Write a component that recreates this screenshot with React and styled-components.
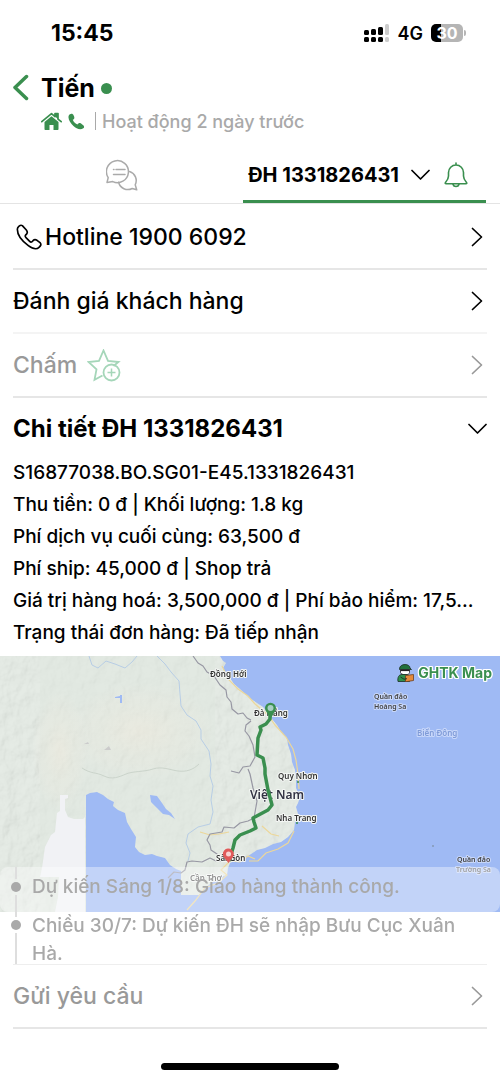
import React from "react";
import styled, { createGlobalStyle, css } from "styled-components";

const GREEN = "#3a8f4f";

const GlobalStyle = createGlobalStyle`
  * {
    box-sizing: border-box;
  }
  body {
    margin: 0;
    background: #fff;
    color: #000;
    font-family: Inter, "Noto Sans", sans-serif;
  }
  button {
    font: inherit;
    color: inherit;
    background: none;
    border: 0;
    padding: 0;
    text-align: left;
    cursor: pointer;
  }
  p, h1, h2, ul {
    margin: 0;
    padding: 0;
    list-style: none;
  }
  svg {
    display: block;
    flex: none;
  }
`;

const StatusBar = styled.div`
  height: 66px;
  padding: 0 34px 0 51px;
  display: flex;
  align-items: center;
  justify-content: space-between;
`;

const Clock = styled.span`
  font-size: 23px;
  font-weight: 700;
`;

const StatusIcons = styled.div`
  display: flex;
  align-items: center;
  gap: 8px;
  font-size: 18px;
  font-weight: 600;
`;

const Battery = styled.div`
  display: flex;
  align-items: center;
  gap: 1px;
  &::after {
    content: "";
    width: 2px;
    height: 6px;
    border-radius: 0 2px 2px 0;
    background: #b5b5b5;
  }
`;

const BatteryBody = styled.div`
  width: 32px;
  height: 18px;
  border-radius: 5px;
  background: linear-gradient(90deg, #000 30%, #b5b5b5 30%);
  color: #fff;
  font-size: 16px;
  font-weight: 700;
  line-height: 18px;
  text-align: center;
`;

const Header = styled.header`
  height: 81px;
  padding: 6px 13px 0;
  display: flex;
  align-items: flex-start;
  gap: 12px;
`;

const BackButton = styled.button`
  margin-top: 2px;
`;

const NameRow = styled.div`
  height: 32px;
  display: flex;
  align-items: center;
  gap: 6px;
`;

const Name = styled.h1`
  font-size: 25px;
  line-height: 32px;
  font-weight: 700;
`;

const OnlineDot = styled.span`
  width: 11px;
  height: 11px;
  border-radius: 50%;
  background: ${GREEN};
`;

const Activity = styled.div`
  height: 34px;
  display: flex;
  align-items: center;
  gap: 6px;
  color: #a9a9a9;
  font-size: 18px;
  font-weight: 500;
`;

const Separator = styled.span`
  width: 1px;
  height: 18px;
  margin: 0 0 0 4px;
  background: #a9a9a9;
`;

const Tabs = styled.nav`
  height: 57px;
  padding: 0 14px 0 0;
  display: flex;
  border-bottom: 1px solid #e4e4e4;
`;

const Tab = styled.button`
  width: 50%;
  display: flex;
  align-items: center;
  justify-content: center;
  white-space: nowrap;
  ${({ $active }) => $active && css`
    gap: 14px;
    padding: 3px 18px 0 0;
    justify-content: flex-end;
    border-bottom: 3px solid ${GREEN};
  `}
`;

const TabLabel = styled.span`
  display: flex;
  align-items: center;
  gap: 12px;
  font-size: 20px;
  font-weight: 700;
`;

const Content = styled.main`
  padding-top: 2px;
`;

const MenuRow = styled.button`
  width: calc(100% - 26px);
  height: 64px;
  margin: 0 13px;
  padding: 0 4px 0 0;
  display: flex;
  align-items: center;
  justify-content: space-between;
  border-bottom: 2px solid ${({ $light }) => ($light ? "#f4f4f4" : "#e6e6e6")};
  color: ${({ $muted }) => ($muted ? "#999" : "#000")};
  font-size: 23px;
  font-weight: 500;
`;

const RowLabel = styled.span`
  display: flex;
  align-items: center;
  gap: ${({ $gap }) => $gap || 0}px;
`;

const DetailHeader = styled.button`
  width: calc(100% - 26px);
  height: 59px;
  margin: 0 13px;
  padding-top: 2px;
  display: flex;
  align-items: center;
  justify-content: space-between;
`;

const DetailTitle = styled.span`
  font-size: 24px;
  font-weight: 700;
`;

const DetailList = styled.ul`
  padding: 0 10px 7px 13px;
  font-size: 19px;
  line-height: 32px;
  font-weight: 500;
`;

const DetailItem = styled.li`
  overflow: hidden;
  text-overflow: ellipsis;
  white-space: nowrap;
`;

const MapPanel = styled.section`
  position: relative;
  background: #9fbaf4;
  svg.map {
    width: 100%;
    height: auto;
  }
`;

const MapBrand = styled.div`
  position: absolute;
  top: 6px;
  right: 8px;
  display: flex;
  align-items: center;
  gap: 4px;
  color: ${GREEN};
  font-size: 14px;
  line-height: 22px;
  font-weight: 700;
  text-shadow: 1px 0 #fff, -1px 0 #fff, 0 1px #fff, 0 -1px #fff, 1px 1px #fff, -1px -1px #fff, 1px -1px #fff, -1px 1px #fff;
`;

const MapText = styled.text`
  font-family: "Noto Sans", sans-serif;
  font-size: ${({ $size }) => $size || 8}px;
  font-weight: 600;
  fill: ${({ $fill }) => $fill || "#333"};
  stroke: ${({ $halo }) => $halo || "#f4f6f4"};
  stroke-width: 2px;
  stroke-linejoin: round;
  paint-order: stroke;
`;

const Timeline = styled.ul`
  position: relative;
  margin-top: -45px;
`;

const TimelineItem = styled.li`
  min-height: 45px;
  padding: 0 13px 0 11px;
  display: flex;
  gap: 11px;
  color: #a9a9a9;
  font-size: 19px;
  line-height: 28px;
  font-weight: 500;
  ${({ $glass }) => $glass && css`
    border-radius: 8px;
    background: rgba(255, 255, 255, 0.37);
  `}
`;

const Rail = styled.span`
  width: 10px;
  display: flex;
  flex-direction: column;
  align-items: center;
  gap: 3px;
`;

const RailLine = styled.span`
  width: 2px;
  flex: ${({ $length }) => ($length ? `0 0 ${$length}px` : "1")};
  background: #dedede;
`;

const RailDot = styled.span`
  width: 10px;
  height: 10px;
  border-radius: 50%;
  background: #a9a9a9;
`;

const TimelineText = styled.p`
  flex: 1;
  padding-top: ${({ $top }) => $top}px;
  margin-bottom: -4px;
`;

const Divider = styled.hr`
  height: 1px;
  margin: 0 13px;
  border: 0;
  background: #eee;
`;

const HomeIndicator = styled.div`
  width: 178px;
  height: 7px;
  margin: 34px auto 10px;
  border-radius: 4px;
  background: #000;
`;

function SignalIcon() {
  return (
    <svg width="26" height="18" viewBox="0 0 26 18">
      <g fill="#000">
        <rect x="0" y="6" width="5" height="5" rx="1.500" />
        <rect x="7" y="5" width="5" height="6" rx="1.500" />
        <rect x="14" y="3" width="5" height="8" rx="1.500" />
        <rect x="0" y="13" width="5" height="5" rx="1.500" />
        <rect x="7" y="13" width="5" height="5" rx="1.500" />
        <rect x="14" y="13" width="5" height="5" rx="1.500" />
      </g>
      <g fill="#ccc">
        <rect x="21" y="0" width="4" height="11" rx="1.500" />
        <rect x="21" y="13" width="4" height="5" rx="1.500" />
      </g>
    </svg>
  );
}

function BackIcon() {
  return (
    <svg width="16" height="27" viewBox="0 0 16 27" fill="none" stroke={GREEN} strokeWidth="3.500" strokeLinecap="round" strokeLinejoin="round">
      <path d="M13.500 2.500 2 13.500l11.500 11" />
    </svg>
  );
}

function HomeIcon() {
  return (
    <svg width="21" height="18" viewBox="0 0 21 18" fill={GREEN}>
      <path d="M10.500 4.200 3.500 10v7c0 .6.400 1 1 1h4v-5h4v5h4c.6 0 1-.4 1-1v-7z" />
      <path d="M.8 9.700 10.500 1.600l3.500 3V1.500h3v5.600l3.200 2.600" fill="none" stroke={GREEN} strokeWidth="1.700" strokeLinecap="round" strokeLinejoin="round" />
      <path d="M14 1h3v6l-3-2.500z" />
    </svg>
  );
}

function SmallPhoneIcon() {
  return (
    <svg width="17" height="17" viewBox="171 129 50 50" fill={GREEN}>
      <path d="M173 137c4-7 12-8 15 0 3 6 2 10-3 12 3 7 8 12 14 14 3-5 8-6 13-1 7 4 8 9 4 12-9 6-21 1-29-7-9-9-17-20-14-30z" />
    </svg>
  );
}

function ChatIcon() {
  return (
    <svg width="32" height="32" viewBox="0 0 32 32" fill="none" stroke="#aaa" strokeWidth="1.500" strokeLinecap="round" strokeLinejoin="round">
      <path d="M1 23.500 2.200 18.600A11 11 0 1 1 6.800 22.600z" />
      <path d="M7.500 10.500h.5M10 10.500h9M7.500 15.500h11.500" />
      <path d="M23.600 12.500a9.500 9.500 0 0 1 5.600 13.300l1.500 5-4.500-1.300a9.500 9.500 0 0 1-13.600-6.200" />
    </svg>
  );
}

function BellIcon() {
  return (
    <svg width="24" height="26" viewBox="0 0 24 26" fill="none" stroke={GREEN} strokeWidth="1.600" strokeLinecap="round" strokeLinejoin="round">
      <path d="M12 1v2M4.500 14V10.500a7.500 7.500 0 0 1 15 0V14c0 3 1.200 4.500 3 6.500.6.800.3 1.300-.6 1.300H2.100c-.9 0-1.200-.5-.6-1.300 1.800-2 3-3.500 3-6.500zM9 22.500c.8 2.700 5.200 2.700 6 0" />
    </svg>
  );
}

function PhoneIcon() {
  return (
    <svg width="29" height="26" viewBox="39 250 87 78" fill="none" stroke="#000" strokeWidth="5" strokeLinejoin="round">
      <path d="M52 266c0-7 9-15 15-11l12 13c4 5 4 8 1 12-5 4-6 7-2 11l11 11c4 4 7 2 10-2 4-4 7-4 12-1l9 7c5 5 2 10-3 14-6 6-17 6-32-5-18-13-33-31-33-49z" />
    </svg>
  );
}

function StarPlusIcon() {
  return (
    <svg width="34" height="33" viewBox="0 0 34 33" fill="none" stroke="#a5d6b9" strokeWidth="1.800">
      <path d="M26.500 17 31.500 13 21 11.800 16.500 1.500 12 11.800 1.500 13l8 7.300-2 10.500 8-4.300" strokeLinejoin="miter" />
      <circle cx="24.500" cy="23.500" r="8" />
      <path d="M24.500 19.500v8M20.500 23.500h8" strokeWidth="1.500" />
    </svg>
  );
}

function ChevronRight() {
  return (
    <svg width="12" height="20" viewBox="0 0 12 20" fill="none" stroke="currentColor" strokeWidth="1.700" strokeLinecap="round" strokeLinejoin="round">
      <path d="m1.500 1.500 9 8.500-9 8.500" />
    </svg>
  );
}

function ChevronDown() {
  return (
    <svg width="19" height="12" viewBox="0 0 19 12" fill="none" stroke="currentColor" strokeWidth="1.700" strokeLinecap="round" strokeLinejoin="round">
      <path d="m1 1.500 8.500 8.500L18 1.500" />
    </svg>
  );
}

function CourierIcon() {
  return (
    <svg width="17" height="18" viewBox="0 0 17 18">
      <path d="M2.500 5C2.500 2 5 .5 8 .5s5 1.500 5 3.500l1.500 1.500h-12z" fill="#22713d" stroke="#1c2d22" strokeWidth=".8" />
      <path d="M3.500 5.500h9v3c0 1.500-1.500 2.200-4 2.200S3.500 10 3.500 8.500z" fill="#fff" stroke="#222" strokeWidth=".8" />
      <path d="M3.500 5.500h9v1.600h-9z" fill="#222" />
      <path d="M1 17.500c-.7-4 .8-7 4-7h4c2 0 3 1 3.500 3v4z" fill="#2f8f4b" stroke="#1c2d22" strokeWidth=".8" />
      <path d="m8.500 11.500 8-1v6l-8 1.300z" fill="#e58a3c" stroke="#6b3f1e" strokeWidth=".8" />
      <path d="m3.500 13 3.500 2.200 3-.5" fill="none" stroke="#1c2d22" strokeWidth=".9" />
    </svg>
  );
}

const LAND =
  "M0 0H220l3 5 3 2-3 5 2 5 5 5 4 6 6 5 5 5 6 5 6 4 6 4 5 6 4 6 5 6 4 7 6 6 1 7 3 9 1 8 3 8 1 10 0 8 4 9-2 6-2 4 2 7-3 8-1 8-6 7-7 5-8 2-8 4-8 2-9 6-8 1-4 3-6 3-2 5-1 7-9 3-8 6-6 5-5 6H181v-24l-5-2-6-4-5-7-8-2-5-2-7 1-6-3-4-5 1-10-5-8-4-7-2-9-7-3-5-4 1-4-6-3-5-4-6-3-7 1-4 2V256H0z";

function RouteMap() {
  return (
    <svg className="map" viewBox="0 0 500 256" role="img" aria-label="GHTK Map">
      <defs>
        <clipPath id="land">
          <path d={LAND} />
        </clipPath>
        <filter id="relief" x="0" y="0" width="100%" height="100%">
          <feTurbulence type="fractalNoise" baseFrequency="0.08 0.06" numOctaves="4" seed="8" />
          <feDiffuseLighting surfaceScale="3" lightingColor="#fff">
            <feDistantLight azimuth="225" elevation="62" />
          </feDiffuseLighting>
        </filter>
        <radialGradient id="plain">
          <stop offset="0" stopColor="#e8e8dd" />
          <stop offset="1" stopColor="#e8e8dd" stopOpacity="0" />
        </radialGradient>
      </defs>
      <rect width="500" height="256" fill="#9fbaf4" />
      <path d={LAND} fill="#dfe7df" />
      <g clipPath="url(#land)">
        <ellipse cx="140" cy="75" rx="75" ry="48" fill="url(#plain)" />
        <ellipse cx="60" cy="95" rx="28" ry="60" fill="url(#plain)" />
        <g opacity="0.2">
          <rect width="40" height="256" filter="url(#relief)" />
          <rect x="215" width="95" height="256" filter="url(#relief)" />
        </g>
        <rect x="40" width="175" height="256" filter="url(#relief)" opacity="0.1" />
        <path d="M82 112c9 6 14 4 22 8s15 1 22-2 18-2 27-5 17 1 25 2 15-1 21-7" fill="none" stroke="#cbd4cb" />
      </g>
      <path d="M60 139h8v3l-3 1v11l3 7 6 2h9l2-2v95H55l3-15 1-20H40l2-9 3-21 6-12 4-3 2-19 3-2z" fill="#f1f2f5" />
      <path d="M150 139l7 1 5 7 4 6 5 4 4 6-6-4-6-1-6-6-6-6zM115 41l5-1v-1h2v8h-2v-5h-5z" fill="#9fbaf4" />
      <path d="m104 94 5-4 2 4zM84 88l4-2 1 2z" fill="#cbcbcb" />
      <path d="M89 0l3 9 6 3 8-7 9 3 10 4 7-6 5-6M157 0l8 8 6 8 8 9 1 13 1 12 6 9 9 6 5 9 0 9 8 12 2 13-1 12 3 10-2 14 2 12-3 12-12 3-10 7-2 9 4 10-2 8" fill="none" stroke="#b7cde5" strokeWidth="1" />
      <path d="M200 176l10 3 9-1 10-2M222 10l7 14 9 9 10 7 7 8 13 11 7 10 11 12 7 12 3 11 2 14 1 15M294 175l-6 12-10 6-12 4-8 8-9 0M262 170l9 8 8 2M229 206l-8 8 6 5-9 8-13 5-10 13-8 9M231 205l9 1 8-6 7 3" fill="none" stroke="#ecd79a" strokeWidth="1.200" />
      <path d="M193 0l5 7 5 3 4 6 7 4 6 9 6 5 1 7 4 5 1 7 6 5 5-1 4 5 4 2M251 65l-5 4-1 6 4 5 4 9 2 12-5 9-7 1-4 6-8-2M250 118l-2-5M250 118l3 14 4 13-3 17-6 3-8 2-6 5-10-1-2 5-12 2-3 6 3 5 1 5 6 4 4 7-5 0-6-3-8 4-10-1-5 1-2 8-4 3-7-1-6 6" fill="none" stroke="#9797a3" strokeWidth="1.200" strokeLinejoin="round" />
      <path d="M229 213l4 2 2 5 2-5-1-5 3 6M235 207l3 5 4-1" fill="none" stroke="#9fbaf4" strokeWidth="1.500" />
      <circle cx="298" cy="126" r="1" fill="#3a8f4f" />
      <circle cx="297" cy="167" r="1" fill="#3a8f4f" />
      <circle cx="433" cy="190" r="1" fill="#8499b5" />

      <MapText x="210" y="21">Đồng Hới</MapText>
      <MapText x="254" y="60">Đà Nẵng</MapText>
      <MapText x="278" y="123">Quy Nhơn</MapText>
      <MapText x="250" y="143" $size={12} $fill="#333344">Việt Nam</MapText>
      <MapText x="276" y="165">Nha Trang</MapText>
      <MapText x="216" y="205">Sài Gòn</MapText>
      <MapText x="190" y="225" $fill="#555">Cần Thơ</MapText>
      <MapText x="374" y="43" $size={7} $fill="#444" $halo="#c9d8fa">Quần đảo</MapText>
      <MapText x="374" y="53" $size={7} $fill="#444" $halo="#c9d8fa">Hoàng Sa</MapText>
      <MapText x="417" y="80" $fill="#7f9bd8" $halo="#c9d8fa">Biển Đông</MapText>
      <MapText x="457" y="206" $size={7} $fill="#444" $halo="#c9d8fa">Quần đảo</MapText>
      <MapText x="456" y="216" $size={7} $fill="#666" $halo="#c9d8fa">Trường Sa</MapText>

      <path d="M270 57v6l-4 5-6 3 1 3-3 8-1 17 6 3 2 10v6l3 16 4 15-4 5-15 8 1 4 2 6-6 3-10 4-5 5-2 8-4 13" fill="none" stroke={GREEN} strokeWidth="3.500" strokeLinejoin="round" />
      <path d="M270.500 63l-4-7a5.500 5.500 0 1 1 8 0z" fill={GREEN} />
      <circle cx="270.500" cy="52" r="3" fill="#a9cfc4" />
      <path d="M228.500 207l-4-5a5.500 5.500 0 1 1 8.500-1z" fill="#e05a5a" />
      <circle cx="228.500" cy="198" r="2.500" fill="#f7d4d4" />
    </svg>
  );
}

const details = [
  "S16877038.BO.SG01-E45.1331826431",
  "Thu tiền: 0 đ | Khối lượng: 1.8 kg",
  "Phí dịch vụ cuối cùng: 63,500 đ",
  "Phí ship: 45,000 đ | Shop trả",
  "Giá trị hàng hoá: 3,500,000 đ | Phí bảo hiểm: 17,5...",
  "Trạng thái đơn hàng: Đã tiếp nhận",
];

function App() {
  return (
    <>
      <GlobalStyle />
      <StatusBar>
        <Clock>15:45</Clock>
        <StatusIcons>
          <SignalIcon />
          <span>4G</span>
          <Battery>
            <BatteryBody>30</BatteryBody>
          </Battery>
        </StatusIcons>
      </StatusBar>

      <Header>
        <BackButton aria-label="Quay lại">
          <BackIcon />
        </BackButton>
        <div>
          <NameRow>
            <Name>Tiến</Name>
            <OnlineDot />
          </NameRow>
          <Activity>
            <HomeIcon />
            <SmallPhoneIcon />
            <Separator />
            <span>Hoạt động 2 ngày trước</span>
          </Activity>
        </div>
      </Header>

      <Tabs>
        <Tab aria-label="Trò chuyện">
          <ChatIcon />
        </Tab>
        <Tab $active>
          <TabLabel>
            ĐH 1331826431
            <ChevronDown />
          </TabLabel>
          <BellIcon />
        </Tab>
      </Tabs>

      <Content>
        <MenuRow>
          <RowLabel $gap={3}>
            <PhoneIcon />
            Hotline 1900 6092
          </RowLabel>
          <ChevronRight />
        </MenuRow>
        <MenuRow $light>
          <RowLabel>Đánh giá khách hàng</RowLabel>
          <ChevronRight />
        </MenuRow>
        <MenuRow $muted>
          <RowLabel $gap={10}>
            Chấm
            <StarPlusIcon />
          </RowLabel>
          <ChevronRight />
        </MenuRow>

        <DetailHeader>
          <DetailTitle>Chi tiết ĐH 1331826431</DetailTitle>
          <ChevronDown />
        </DetailHeader>
        <DetailList>
          {details.map((line) => (
            <DetailItem key={line}>{line}</DetailItem>
          ))}
        </DetailList>

        <MapPanel>
          <RouteMap />
          <MapBrand>
            <CourierIcon />
            GHTK Map
          </MapBrand>
        </MapPanel>

        <Timeline>
          <TimelineItem $glass>
            <Rail>
              <RailLine $length={12} />
              <RailDot />
              <RailLine />
            </Rail>
            <TimelineText $top={6}>Dự kiến Sáng 1/8: Giao hàng thành công.</TimelineText>
          </TimelineItem>
          <TimelineItem>
            <Rail>
              <RailLine $length={5} />
              <RailDot />
              <RailLine />
            </Rail>
            <TimelineText $top={0}>Chiều 30/7: Dự kiến ĐH sẽ nhập Bưu Cục Xuân Hà.</TimelineText>
          </TimelineItem>
        </Timeline>
        <Divider />

        <MenuRow $muted>
          <RowLabel>Gửi yêu cầu</RowLabel>
          <ChevronRight />
        </MenuRow>
      </Content>
      <HomeIndicator />
    </>
  );
}

export default App;
